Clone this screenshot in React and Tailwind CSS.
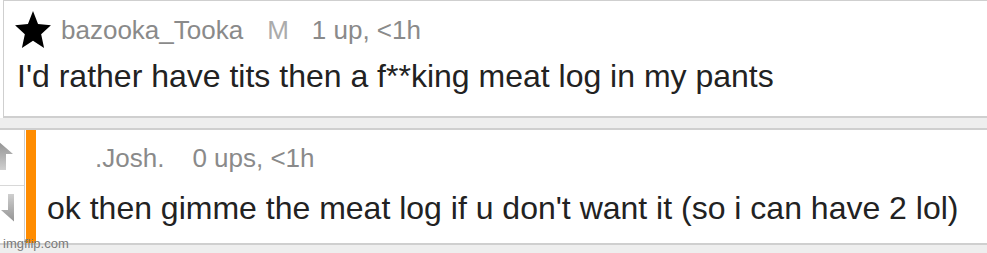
import React from "react";

function Star() {
  return (
    <svg width="36" height="37" viewBox="1.5 1.5 21 19.9" preserveAspectRatio="none" className="shrink-0">
      <path d="M12 1.5L14.94 8.45 22.46 9.1 16.76 14.05 18.47 21.4 12 17.5 5.53 21.4 7.24 14.05 1.54 9.1 9.06 8.45z" fill="#000" />
    </svg>
  );
}

function Arrow({ down }) {
  const id = down ? "gd" : "gu";
  return (
    <svg width="14" height="32" viewBox="0 0 14 32" className={down ? "rotate-180" : ""}>
      <defs>
        <linearGradient id={id} x1="0" y1="0" x2="0" y2="1">
          <stop offset="0" stopColor="#8f8f8f" />
          <stop offset="1" stopColor="#cfcfcf" />
        </linearGradient>
      </defs>
      <path d="M-3 2L13 16H6V32H-3z" fill={`url(#${id})`} />
    </svg>
  );
}

export default function App() {
  return (
    <div className="relative w-[987px] h-[253px] overflow-hidden bg-[#eeeeee] font-['Liberation_Sans',Arial,sans-serif]">
      {/* first comment */}
      <div className="bg-white pl-[3px]">
        <div className="h-[118px] bg-white border-t border-l border-b-2 border-[#cfcfcf]">
          <div className="flex items-start pl-[11px] pt-[10px]">
            <Star />
            <div className="ml-[10px] mt-[4px] flex text-[26px] leading-[30px]">
              <span className="text-[#8a8a8a]">bazooka_Tooka</span>
              <span className="ml-[24px] text-[#ababab]">M</span>
              <span className="ml-[23px] text-[#8a8a8a]">1 up, &lt;1h</span>
            </div>
          </div>
          <p className="mt-[10px] pl-[13px] text-[32px] leading-[36px] text-[#222]">
            I'd rather have tits then a f**king meat log in my pants
          </p>
        </div>
      </div>

      {/* reply */}
      <div className="mt-[10px] flex h-[117px] bg-white border-t-2 border-b-2 border-[#cfcfcf]">
        <div className="flex w-[25px] shrink-0 flex-col border-r border-[#cfcfcf]">
          <div className="flex h-[56px] items-start pt-[8px] border-b border-[#d8d8d8]">
            <Arrow />
          </div>
          <div className="flex flex-1 items-start pt-[8px]">
            <Arrow down />
          </div>
        </div>
        <div className="ml-[1px] w-[10px] shrink-0 bg-[#ff8c00]" />
        <div className="flex-1">
          <div className="mt-[13px] ml-[59px] flex text-[26px] leading-[30px]">
            <span className="text-[#8a8a8a]">.Josh.</span>
            <span className="ml-[28px] text-[#8a8a8a]">0 ups, &lt;1h</span>
          </div>
          <p className="mt-[17px] ml-[11px] text-[32px] leading-[36px] text-[#222]">
            ok then gimme the meat log if u don't want it (so i can have 2 lol)
          </p>
        </div>
      </div>

      <div className="absolute left-[3px] bottom-[2px] text-[13px] leading-[14px] text-[#7a7a7a]">
        imgflip.com
      </div>
    </div>
  );
}
